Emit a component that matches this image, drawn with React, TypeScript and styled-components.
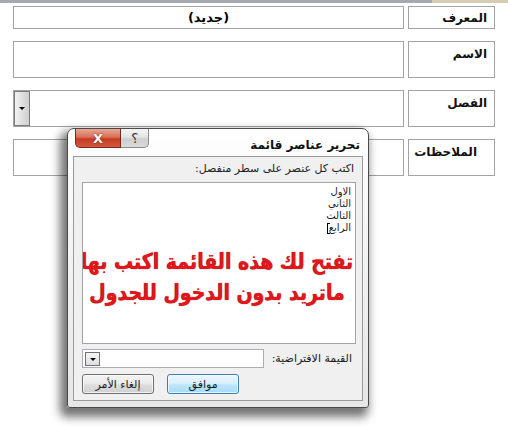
import React from "react";
import styled, { createGlobalStyle } from "styled-components";

const Global = createGlobalStyle`
  html, body { margin: 0; padding: 0; background: #ffffff; }
  body { width: 508px; height: 426px; overflow: hidden; font-family: "DejaVu Sans", Tahoma, sans-serif; }
  #root { position: relative; width: 508px; height: 426px; }
`;

const Page = styled.div`
  position: relative;
  width: 508px;
  height: 426px;
  background: #fff;
`;

const TopStrip = styled.div`
  display: flex;
  height: 3px;
`;

const StripPart = styled.div<{ $c: string; $w?: number }>`
  background: ${(p) => p.$c};
  ${(p) => (p.$w ? `width: ${p.$w}px;` : "flex: 1;")}
`;

const Form = styled.div`
  display: flex;
  flex-direction: column;
  gap: 12px;
  padding: 3px 0 0 13px;
`;

const Row = styled.div<{ $h: number }>`
  display: flex;
  gap: 4px;
  height: ${(p) => p.$h}px;
`;

const ValueBox = styled.div`
  box-sizing: border-box;
  width: 391px;
  border: 1px solid #a3a3a3;
  display: flex;
  align-items: center;
  justify-content: center;
  font: bold 13px "DejaVu Sans", sans-serif;
  color: #000;
  direction: rtl;
`;

const ComboValue = styled(ValueBox)`
  justify-content: flex-start;
  direction: ltr;
  padding: 0;
  align-items: stretch;
`;

const DropBtn = styled.div`
  box-sizing: border-box;
  width: 16px;
  border: 1px solid #7a7a7a;
  background: linear-gradient(90deg, #f2f2f2, #dcdcdc 60%, #cfcfcf);
  display: flex;
  align-items: center;
  justify-content: center;
`;

const Arrow = styled.div<{ $s?: number }>`
  width: 0;
  height: 0;
  border-left: ${(p) => p.$s ?? 3.5}px solid transparent;
  border-right: ${(p) => p.$s ?? 3.5}px solid transparent;
  border-top: ${(p) => p.$s ?? 3.5}px solid #000;
`;

const LabelBox = styled.div<{ $pr: number; $center?: boolean }>`
  box-sizing: border-box;
  width: 87px;
  border: 1px solid #a3a3a3;
  direction: rtl;
  font: bold 12px "DejaVu Sans", sans-serif;
  color: #111;
  padding: ${(p) => (p.$center ? "0" : "5px")} ${(p) => p.$pr}px 0 0;
  display: flex;
  align-items: ${(p) => (p.$center ? "center" : "flex-start")};
`;

/* ---------- dialog ---------- */

const Dialog = styled.div`
  position: absolute;
  left: 67px;
  top: 128px;
  width: 302px;
  height: 280px;
  box-sizing: border-box;
  border: 1px solid #4a4a4a;
  border-radius: 7px 7px 3px 3px;
  background: linear-gradient(180deg, #ffffff 0%, #f4f4f4 40%, #e6e6e6 100%);
  box-shadow: -4px 6px 10px 3px rgba(0, 0, 0, 0.55);
  display: flex;
  flex-direction: column;
  padding: 0 5px 6px 5px;
`;

const TitleBar = styled.div`
  height: 27px;
  display: flex;
  align-items: flex-start;
  justify-content: space-between;
`;

const CaptionButtons = styled.div`
  display: flex;
  margin-left: 2px;
`;

const CapBtn = styled.div<{ $kind: "close" | "help" }>`
  box-sizing: border-box;
  height: 19px;
  width: ${(p) => (p.$kind === "close" ? 46 : 28)}px;
  border: 1px solid ${(p) => (p.$kind === "close" ? "#7a2a1c" : "#8a8a8a")};
  border-top: none;
  border-radius: ${(p) => (p.$kind === "close" ? "0 0 0 5px" : "0 0 5px 0")};
  ${(p) => (p.$kind === "help" ? "border-left: none;" : "")}
  background: ${(p) =>
    p.$kind === "close"
      ? "linear-gradient(180deg, #e9a793 0%, #d9705a 45%, #c73b22 55%, #d4583c 100%)"
      : "linear-gradient(180deg, #f4f4f4 0%, #e4e4e4 45%, #cfcfcf 55%, #dadada 100%)"};
  display: flex;
  align-items: center;
  justify-content: center;
  color: ${(p) => (p.$kind === "close" ? "#fff" : "#333")};
  font: bold 13px "DejaVu Sans", sans-serif;
  text-shadow: ${(p) => (p.$kind === "close" ? "0 0 2px #6b1a0c" : "0 0 1px #fff")};
`;

const Mirror = styled.span`
  display: inline-block;
  transform: scaleX(-1);
  font-weight: normal;
  font-size: 14px;
`;

const Title = styled.div`
  direction: rtl;
  font: bold 12px "DejaVu Sans", sans-serif;
  color: #111;
  margin-top: 9px;
  margin-right: 3px;
`;

const Client = styled.div`
  flex: 1;
  box-sizing: border-box;
  background: #f0f0f0;
  border: 1px solid #9a9a9a;
  display: flex;
  flex-direction: column;
  padding: 5px 6px 0 8px;
  direction: rtl;
  font: 11px "DejaVu Sans", sans-serif;
  color: #1a1a1a;
`;

const Prompt = styled.div`
  height: 14px;
  padding-right: 2px;
  line-height: 14px;
  white-space: nowrap;
`;

const ListArea = styled.div`
  margin-top: 6px;
  box-sizing: border-box;
  height: 162px;
  background: #fff;
  border: 1px solid #a4a4a4;
  padding: 3px 4px 0 0;
  display: flex;
  flex-direction: column;
  overflow: hidden;
`;

const Line = styled.div`
  height: 12px;
  line-height: 12px;
  font-size: 10px;
  color: #222;
  display: flex;
  align-items: center;
`;

const Caret = styled.span`
  display: inline-block;
  width: 1px;
  height: 11px;
  background: #000;
  margin-right: 1px;
  position: relative;
  &::before,
  &::after {
    content: "";
    position: absolute;
    left: 0;
    width: 3px;
    height: 1px;
    background: #000;
  }
  &::before { top: 0; }
  &::after { bottom: 0; }
`;

const Notice = styled.div`
  margin-top: 12px;
  display: flex;
  flex-direction: column;
  align-items: center;
  font: bold 22px "DejaVu Sans", sans-serif;
  color: #e4151b;
  text-shadow: 0 0 1px #7a0000;
  line-height: 31px;
  white-space: nowrap;
  transform: scaleX(0.86);
`;

const DefaultRow = styled.div`
  margin-top: 5px;
  display: flex;
  align-items: center;
  justify-content: space-between;
  height: 19px;
`;

const DefaultLabel = styled.div`
  padding-right: 4px;
  white-space: nowrap;
`;

const Combo = styled.div`
  box-sizing: border-box;
  width: 182px;
  height: 19px;
  background: #fff;
  border: 1px solid #abadb3;
  display: flex;
  direction: ltr;
  padding: 2px;
`;

const SmallDrop = styled.div`
  box-sizing: border-box;
  width: 15px;
  height: 14px;
  border: 1px solid #707070;
  background: linear-gradient(180deg, #f5f5f5, #dedede);
  display: flex;
  align-items: center;
  justify-content: center;
`;

const ButtonRow = styled.div`
  margin-top: 6px;
  display: flex;
  direction: ltr;
  gap: 13px;
`;

const Btn = styled.div<{ $primary?: boolean }>`
  box-sizing: border-box;
  width: 72px;
  height: 20px;
  border-radius: 3px;
  border: 1px solid ${(p) => (p.$primary ? "#3c7fb1" : "#707070")};
  background: ${(p) =>
    p.$primary
      ? "linear-gradient(180deg, #eaf6fd 0%, #d9f0fc 45%, #bee6fd 55%, #a7d9f5 100%)"
      : "linear-gradient(180deg, #f2f2f2 0%, #ebebeb 45%, #dddddd 55%, #cfcfcf 100%)"};
  box-shadow: inset 0 0 0 1px rgba(255, 255, 255, 0.7);
  display: flex;
  align-items: center;
  justify-content: center;
  font: 11px "DejaVu Sans", sans-serif;
  color: #1a1a1a;
  direction: rtl;
`;

export default function App() {
  return (
    <Page>
      <Global />
      <TopStrip>
        <StripPart $c="#a5a9b0" />
        <StripPart $c="#d8cbb4" $w={76} />
      </TopStrip>
      <Form>
        <Row $h={23}>
          <ValueBox>(جديد)</ValueBox>
          <LabelBox $pr={7} $center>المعرف</LabelBox>
        </Row>
        <Row $h={37}>
          <ValueBox />
          <LabelBox $pr={7}>الاسم</LabelBox>
        </Row>
        <Row $h={37}>
          <ComboValue>
            <DropBtn>
              <Arrow />
            </DropBtn>
          </ComboValue>
          <LabelBox $pr={7}>الفصل</LabelBox>
        </Row>
        <Row $h={37}>
          <ValueBox />
          <LabelBox $pr={17}>الملاحظات</LabelBox>
        </Row>
      </Form>

      <Dialog>
        <TitleBar>
          <CaptionButtons>
            <CapBtn $kind="close">X</CapBtn>
            <CapBtn $kind="help">
              <Mirror>?</Mirror>
            </CapBtn>
          </CaptionButtons>
          <Title>تحرير عناصر قائمة</Title>
        </TitleBar>
        <Client>
          <Prompt>اكتب كل عنصر على سطر منفصل:</Prompt>
          <ListArea>
            <Line>الاول</Line>
            <Line>الثاني</Line>
            <Line>الثالث</Line>
            <Line>
              الرابع
              <Caret />
            </Line>
            <Notice>
              <span>تفتح لك هذه القائمة اكتب بها</span>
              <span>ماتريد بدون الدخول للجدول</span>
            </Notice>
          </ListArea>
          <DefaultRow>
            <DefaultLabel>القيمة الافتراضية:</DefaultLabel>
            <Combo>
              <SmallDrop>
                <Arrow $s={3} />
              </SmallDrop>
            </Combo>
          </DefaultRow>
          <ButtonRow>
            <Btn>إلغاء الأمر</Btn>
            <Btn $primary>موافق</Btn>
          </ButtonRow>
        </Client>
      </Dialog>
    </Page>
  );
}
